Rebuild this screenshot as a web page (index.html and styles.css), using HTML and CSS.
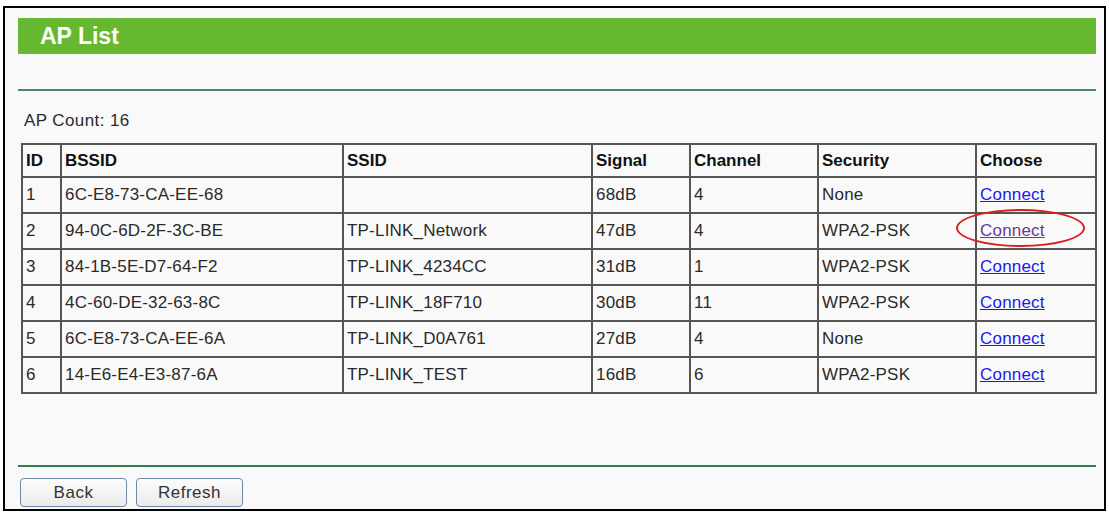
FILE: index.html
```html
<!DOCTYPE html>
<html lang="en">

<head>
    <meta charset="UTF-8">
    <meta name="viewport" content="width=device-width, initial-scale=1.0">
    <title>AP List</title>
    <link rel="stylesheet" href="styles.css">
</head>

<body>
    <div class="page">
        <div class="title-bar">AP List</div>
        <div class="rule rule-top"></div>

        <p class="count">AP Count: 16</p>

        <table class="ap-table">
            <colgroup>
                <col class="col-id">
                <col class="col-bssid">
                <col class="col-ssid">
                <col class="col-signal">
                <col class="col-channel">
                <col class="col-security">
                <col class="col-choose">
            </colgroup>
            <thead>
                <tr>
                    <th>ID</th>
                    <th>BSSID</th>
                    <th>SSID</th>
                    <th>Signal</th>
                    <th>Channel</th>
                    <th>Security</th>
                    <th>Choose</th>
                </tr>
            </thead>
            <tbody>
                <tr>
                    <td>1</td>
                    <td>6C-E8-73-CA-EE-68</td>
                    <td></td>
                    <td>68dB</td>
                    <td>4</td>
                    <td>None</td>
                    <td><a href="#">Connect</a></td>
                </tr>
                <tr>
                    <td>2</td>
                    <td>94-0C-6D-2F-3C-BE</td>
                    <td>TP-LINK_Network</td>
                    <td>47dB</td>
                    <td>4</td>
                    <td>WPA2-PSK</td>
                    <td class="marked"><a href="#" class="visited">Connect</a><span class="ring"></span></td>
                </tr>
                <tr>
                    <td>3</td>
                    <td>84-1B-5E-D7-64-F2</td>
                    <td>TP-LINK_4234CC</td>
                    <td>31dB</td>
                    <td>1</td>
                    <td>WPA2-PSK</td>
                    <td><a href="#">Connect</a></td>
                </tr>
                <tr>
                    <td>4</td>
                    <td>4C-60-DE-32-63-8C</td>
                    <td>TP-LINK_18F710</td>
                    <td>30dB</td>
                    <td>11</td>
                    <td>WPA2-PSK</td>
                    <td><a href="#">Connect</a></td>
                </tr>
                <tr>
                    <td>5</td>
                    <td>6C-E8-73-CA-EE-6A</td>
                    <td>TP-LINK_D0A761</td>
                    <td>27dB</td>
                    <td>4</td>
                    <td>None</td>
                    <td><a href="#">Connect</a></td>
                </tr>
                <tr>
                    <td>6</td>
                    <td>14-E6-E4-E3-87-6A</td>
                    <td>TP-LINK_TEST</td>
                    <td>16dB</td>
                    <td>6</td>
                    <td>WPA2-PSK</td>
                    <td><a href="#">Connect</a></td>
                </tr>
            </tbody>
        </table>

        <div class="rule rule-bottom"></div>

        <div class="actions">
            <button type="button">Back</button>
            <button type="button">Refresh</button>
        </div>
    </div>
</body>

</html>
```

FILE: styles.css
```css
body {
    font-family: "Liberation Sans", Arial, sans-serif;
    margin: 0;
    background-color: #fff;
    color: #2a2a2a;
}

.page {
    box-sizing: border-box;
    width: 1103px;
    height: 505px;
    margin: 6px 0 0 3px;
    padding: 10px 8px 0 13px;
    border: 2px solid #000;
    background-color: #f9f9f9;
}

.title-bar {
    height: 36px;
    line-height: 36px;
    padding-left: 22px;
    background-color: #67b831;
    color: #fff;
    font-size: 23px;
    font-weight: bold;
}

.rule {
    height: 2px;
}

.rule-top {
    margin-top: 35px;
    background-color: #4b8576;
}

.rule-bottom {
    margin-top: 71px;
    background-color: #317c50;
}

.count {
    margin: 20px 0 0 6px;
    font-size: 17px;
    line-height: 20px;
    letter-spacing: 0.4px;
}

/* AP table */
.ap-table {
    width: 1074px;
    margin: 12px 0 0 3px;
    table-layout: fixed;
    border-collapse: collapse;
    border: 2px solid #4a4a4a;
    font-size: 17px;
    letter-spacing: 0.2px;
}

.col-id { width: 39px; }
.col-bssid { width: 282px; }
.col-ssid { width: 249px; }
.col-signal { width: 98px; }
.col-channel { width: 128px; }
.col-security { width: 158px; }
.col-choose { width: 120px; }

.ap-table th,
.ap-table td {
    border: 2px solid #555;
    padding: 0 3px;
    text-align: left;
    white-space: nowrap;
}

.ap-table thead tr {
    height: 33px;
}

.ap-table th {
    color: #111;
    letter-spacing: 0;
}

.ap-table tbody tr {
    height: 36px;
}

.ap-table a {
    color: #1a1aee;
}

.ap-table a.visited {
    color: #6a3a9c;
}

.marked {
    position: relative;
}

/* red ring drawn around the chosen row's link */
.ring {
    position: absolute;
    left: -21px;
    top: -5px;
    width: 129px;
    height: 38px;
    box-sizing: border-box;
    border: 2.5px solid #d81e1e;
    border-radius: 50%;
}

.actions {
    display: flex;
    gap: 9px;
    margin: 11px 0 0 2px;
}

.actions button {
    width: 107px;
    height: 29px;
    padding: 0;
    border: 1px solid #6f87a5;
    border-radius: 4px;
    background: linear-gradient(#fdfdfd, #eaeaea);
    color: #333;
    font-family: "Liberation Sans", Arial, sans-serif;
    font-size: 17px;
    letter-spacing: 0.5px;
    cursor: pointer;
}
```
